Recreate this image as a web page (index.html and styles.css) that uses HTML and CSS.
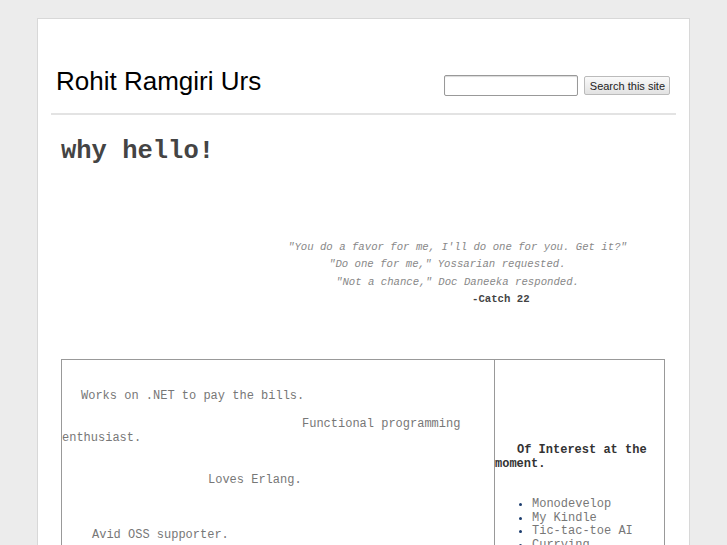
FILE: index.html
```html
<!DOCTYPE html>
<html lang="en">
<head>
    <meta charset="UTF-8">
    <title>Rohit Ramgiri Urs</title>
    <link rel="stylesheet" href="styles.css">
</head>
<body>

<div class="page">
    <div class="header">
        <div class="header-inner">
            <h1 class="site-title">Rohit Ramgiri Urs</h1>
            <form class="search" onsubmit="return false">
                <input type="text" class="search-box">
                <button class="search-btn">Search this site</button>
            </form>
        </div>
    </div>

    <div class="content">
        <h2 class="page-title">why hello!</h2>

        <div class="quote">
            <p class="q1">"You do a favor for me, I'll do one for you. Get it?"</p>
            <p class="q2">"Do one for me," Yossarian requested.</p>
            <p class="q3">"Not a chance," Doc Daneeka responded.</p>
            <p class="q4">-Catch 22</p>
        </div>

        <div class="layout">
            <div class="main-col">
                <p class="w1">Works on .NET to pay the bills.</p>
                <p class="w2">Functional programming enthusiast.</p>
                <p class="w3">Loves Erlang.</p>
                <p class="w4">Avid OSS supporter.</p>
            </div>
            <div class="side-col">
                <p class="side-title">Of Interest at the moment.</p>
                <ul class="interests">
                    <li>Monodevelop</li>
                    <li>My Kindle</li>
                    <li>Tic-tac-toe AI</li>
                    <li>Currying</li>
                </ul>
            </div>
        </div>
    </div>
</div>

</body>
</html>
```

FILE: styles.css
```css
body {
    margin: 0;
    background-color: #ececec;
    font-family: "Liberation Sans", Arial, sans-serif;
}
.page {
    width: 651px;
    margin: 18px auto 0;
    background-color: #fff;
    border: 1px solid #d8d8d8;
    min-height: 600px;
}
.header {
    padding: 0 13px;
}
.header-inner {
    display: flex;
    justify-content: space-between;
    align-items: flex-end;
    padding: 46px 6px 16px 5px;
    border-bottom: 2px solid #e3e3e3;
}
.site-title {
    margin: 0;
    font-size: 26px;
    font-weight: normal;
    color: #000;
    line-height: 32px;
}
.search {
    display: flex;
    align-items: center;
    gap: 6px;
    margin-bottom: 1px;
}
.search-box {
    width: 130px;
    height: 17px;
    padding: 1px;
    margin: 0;
    border: 1px solid #999;
    border-radius: 2px;
    box-shadow: inset 0 1px 1px rgba(0, 0, 0, 0.15);
}
.search-btn {
    height: 19px;
    padding: 0 4px 0 5px;
    font-family: "Liberation Sans", Arial, sans-serif;
    font-size: 11px;
    color: #222;
    background: linear-gradient(#fafafa, #e2e2e2);
    border: 1px solid #bbb;
    border-radius: 2px;
}
.content {
    padding: 0 24px 0 23px;
}
.page-title {
    margin: 22px 0 0 0;
    font-family: "Liberation Mono", "Courier New", monospace;
    font-size: 25.5px;
    font-weight: bold;
    color: #444;
    line-height: 30px;
}
.quote {
    margin-top: 72px;
    font-family: "Liberation Mono", "Courier New", monospace;
    font-size: 10.67px;
    font-style: italic;
    color: #888;
}
.quote p {
    margin: 0;
    line-height: 17.3px;
}
.q1 { padding-left: 227px; }
.q2 { padding-left: 268px; }
.q3 { padding-left: 275px; }
.q4 {
    padding-left: 411px;
    font-style: normal;
    font-weight: bold;
    color: #444;
}
.layout {
    display: grid;
    grid-template-columns: 433px 171px;
    margin-top: 51px;
    border: 1px solid #999;
    font-family: "Liberation Mono", "Courier New", monospace;
    font-size: 12px;
    line-height: 14px;
    color: #777;
}
.main-col {
    border-right: 1px solid #999;
    padding-top: 29px;
}
.main-col p {
    margin: 0;
}
.w1 { text-indent: 19px; }
.w2 { margin-top: 14px !important; text-indent: 240px; }
.w3 { margin-top: 28px !important; text-indent: 146px; }
.w4 { margin-top: 41px !important; text-indent: 30px; }
.side-col {
    padding-top: 83px;
}
.side-title {
    margin: 0;
    font-weight: bold;
    color: #333;
    text-indent: 22px;
}
.interests {
    margin: 27px 0 0 0;
    padding-left: 37px;
    line-height: 13.5px;
}
.interests li::marker {
    color: #1c3d6e;
}
```
